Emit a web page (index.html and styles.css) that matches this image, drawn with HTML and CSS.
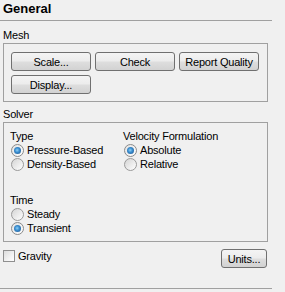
FILE: index.html
```html
<!DOCTYPE html>
<html lang="en">
<head>
    <meta charset="UTF-8">
    <title>General</title>
    <link rel="stylesheet" href="styles.css">
</head>
<body>
    <div class="panel">
        <h1 class="title">General</h1>

        <!-- Mesh -->
        <div class="group-label">Mesh</div>
        <div class="group mesh">
            <div class="btn-row">
                <button class="btn">Scale...</button>
                <button class="btn">Check</button>
                <button class="btn">Report Quality</button>
            </div>
            <div class="btn-row">
                <button class="btn">Display...</button>
            </div>
        </div>

        <!-- Solver -->
        <div class="group-label solver-label">Solver</div>
        <div class="group solver">
            <div class="columns">
                <div class="col">
                    <div class="sub-label">Type</div>
                    <label class="opt"><span class="radio checked"></span>Pressure-Based</label>
                    <label class="opt"><span class="radio"></span>Density-Based</label>
                </div>
                <div class="col">
                    <div class="sub-label">Velocity Formulation</div>
                    <label class="opt"><span class="radio checked"></span>Absolute</label>
                    <label class="opt"><span class="radio"></span>Relative</label>
                </div>
            </div>
            <div class="time">
                <div class="sub-label">Time</div>
                <label class="opt"><span class="radio"></span>Steady</label>
                <label class="opt"><span class="radio checked"></span>Transient</label>
            </div>
        </div>

        <div class="footer-row">
            <label class="check-opt"><span class="checkbox"></span>Gravity</label>
            <button class="btn units">Units...</button>
        </div>

        <div class="bottom-line"></div>
    </div>
</body>
</html>
```

FILE: styles.css
```css
body{
    margin: 0;
    background-color: #f0f0f0;
    font-family: "Liberation Sans", Arial, sans-serif;
    font-size: 11px;
    letter-spacing: -0.2px;
    color: #000;
}
.panel{
    width: 285px;
    height: 292px;
}
.title{
    margin: 0;
    width: 269px;
    height: 20px;
    padding-left: 3px;
    font-size: 13px;
    line-height: 18px;
    font-weight: bold;
    letter-spacing: 0;
    border-bottom: 1px solid #a0a0a0;
}
.group-label{
    margin: 8px 0 0 3px;
    line-height: 13px;
    height: 14px;
}
.solver-label{
    margin-top: 6px;
}
.group{
    margin-left: 3px;
    width: 263px;
    border: 1px solid #a0a0a0;
}
.mesh{
    padding: 8px 0 7px 7px;
    width: 256px;
    display: flex;
    flex-direction: column;
    gap: 4px;
}
.btn-row{
    display: flex;
    gap: 4px;
}
.btn{
    width: 80px;
    height: 19px;
    padding: 0;
    border: 1px solid #707070;
    border-radius: 3px;
    background: linear-gradient(#f4f4f4 0%, #ececec 48%, #dedede 52%, #d2d2d2 100%);
    font-family: "Liberation Sans", Arial, sans-serif;
    font-size: 11px;
    letter-spacing: -0.2px;
    color: #000;
    text-align: center;
}
.solver{
    padding: 7px 0 6px 6px;
    width: 257px;
}
.columns{
    display: flex;
}
.col{
    width: 113px;
}
.sub-label{
    line-height: 13px;
    height: 13px;
}
.opt{
    display: flex;
    align-items: center;
    height: 14px;
    line-height: 14px;
}
.radio{
    width: 11px;
    height: 11px;
    margin: 0 3px 0 1px;
    border: 1px solid #9a9a9a;
    border-radius: 50%;
    background: linear-gradient(135deg, #d4d4d4 0%, #ececec 55%, #ffffff 100%);
    display: flex;
    justify-content: center;
    align-items: center;
    flex-shrink: 0;
}
.radio.checked{
    border-color: #8a8a8a;
    background: linear-gradient(135deg, #e2e2e2, #ffffff);
}
.radio.checked::after{
    content: "";
    width: 7px;
    height: 7px;
    border-radius: 50%;
    background: radial-gradient(circle at 45% 45%, #8fd0f5 0%, #3a8ed0 40%, #1b4f86 100%);
}
.time{
    margin-top: 23px;
}
.footer-row{
    display: flex;
    justify-content: space-between;
    align-items: flex-start;
    width: 267px;
    margin-top: 7px;
}
.check-opt{
    display: flex;
    align-items: center;
    height: 13px;
    margin-left: 3px;
}
.checkbox{
    width: 10px;
    height: 10px;
    margin-right: 3px;
    border: 1px solid #8f8f8f;
    background: linear-gradient(135deg, #dcdcdc 0%, #f2f2f2 60%, #ffffff 100%);
}
.btn.units{
    width: 46px;
}
.bottom-line{
    width: 272px;
    margin-top: 20px;
    border-top: 1px solid #a0a0a0;
}
```
